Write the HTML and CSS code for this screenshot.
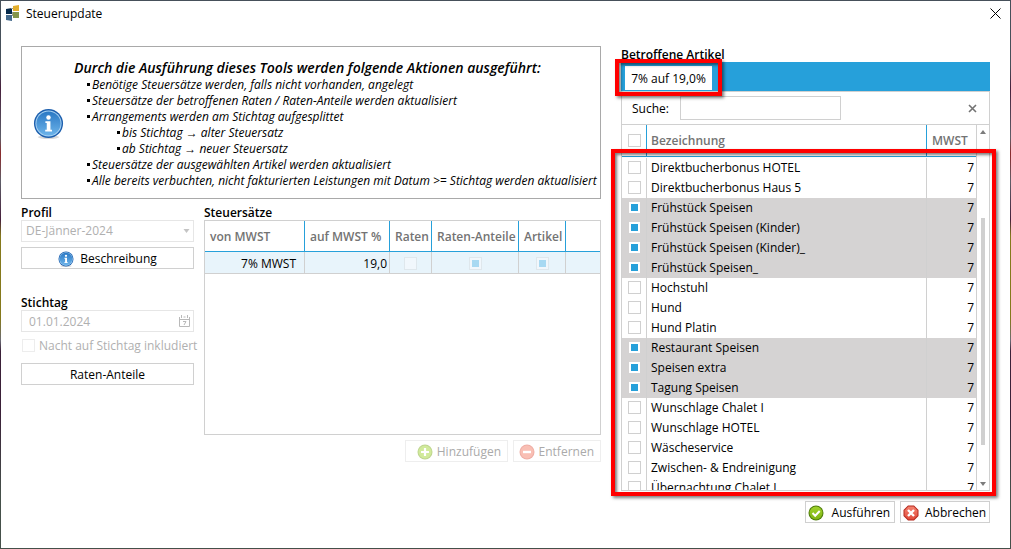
FILE: index.html
```html
<!DOCTYPE html>
<html lang="de">
<head>
<meta charset="utf-8">
<title>Steuerupdate</title>
<link rel="stylesheet" href="styles.css">
</head>
<body>
<svg class="defs" aria-hidden="true">
  <defs>
    <linearGradient id="blue" x1="0" y1="0" x2="0" y2="1"><stop offset="0" stop-color="#2a78c4"/><stop offset="1" stop-color="#6db4ea"/></linearGradient>
    <linearGradient id="green" x1="0" y1="0" x2="0" y2="1"><stop offset="0" stop-color="#a0d22c"/><stop offset="1" stop-color="#7fb414"/></linearGradient>
    <linearGradient id="red" x1="0" y1="0" x2="0" y2="1"><stop offset="0" stop-color="#f58270"/><stop offset="1" stop-color="#e04a3a"/></linearGradient>
    <symbol id="info" viewBox="0 0 32 32">
      <ellipse cx="16" cy="30" rx="11" ry="2" fill="#000" opacity=".15"/>
      <circle cx="16" cy="16" r="15" fill="#1c5fae"/>
      <circle cx="16" cy="16" r="13.5" fill="#a9d3f3"/>
      <circle cx="16" cy="16" r="12.5" fill="url(#blue)"/>
      <circle cx="16" cy="9.700" r="2.300" fill="#fff"/>
      <path d="M12.800 13.600h5.200v8.800h1.600v1.800h-7v-1.800h1.600v-7h-1.400z" fill="#fff"/>
    </symbol>
  </defs>
</svg>
<div class="window">
  <header class="titlebar">
    <svg class="logo" viewBox="0 0 13 17" aria-hidden="true">
      <path d="M7 1l6-1v6H7z" fill="#e3ae2c"/><path d="M0 4l6-1v6H0z" fill="#05294b"/>
      <path d="M7 7h6v6H7z" fill="#83954a"/><path d="M0 10h6v6l-6-1z" fill="#43698c"/>
      <path d="M5 3h2v1H5zM6 7h1v4H6z" fill="#9a9a8e"/>
    </svg>
    <h1>Steuerupdate</h1>
    <button class="close" type="button" aria-label="Schließen"><svg viewBox="0 0 11 11"><path d="M.5.5l10 10M10.500.5l-10 10" stroke="#000" stroke-width="1"/></svg></button>
  </header>
  <main class="content">
    <section class="left">
      <div class="notice">
        <svg class="notice-icon" aria-hidden="true"><use href="#info"/></svg>
        <div>
          <h2>Durch die Ausführung dieses Tools werden folgende Aktionen ausgeführt:</h2>
          <ul>
            <li>Benötige Steuersätze werden, falls nicht vorhanden, angelegt</li>
            <li>Steuersätze der betroffenen Raten / Raten-Anteile werden aktualisiert</li>
            <li>Arrangements werden am Stichtag aufgesplittet
              <ul><li>bis Stichtag → alter Steuersatz</li><li>ab Stichtag → neuer Steuersatz</li></ul>
            </li>
            <li>Steuersätze der ausgewählten Artikel werden aktualisiert</li>
            <li>Alle bereits verbuchten, nicht fakturierten Leistungen mit Datum &gt;= Stichtag werden aktualisiert</li>
          </ul>
        </div>
      </div>
      <div class="settings">
        <form class="form">
          <label class="caption" for="profil">Profil</label>
          <div class="field">
            <select id="profil" disabled><option>DE-Jänner-2024</option></select>
            <svg class="arrow" viewBox="0 0 6 4" aria-hidden="true"><path d="M0 0h6L3 4z" fill="#c4c4c4"/></svg>
          </div>
          <button class="btn describe" type="button"><svg class="icon" aria-hidden="true"><use href="#info"/></svg>Beschreibung</button>
          <label class="caption date-caption" for="stichtag">Stichtag</label>
          <div class="field">
            <input class="date" id="stichtag" type="text" value="01.01.2024" disabled>
            <svg class="calendar" viewBox="0 0 11 12" aria-hidden="true"><path d="M.5 2v9.500h10V2M.5 4.500h10M2.500 0v3M4.500 2h2M8.500 0v3M4 6.500h3L5 10" fill="none" stroke="#b9b9b9"/></svg>
          </div>
          <label class="night"><input class="check" type="checkbox" disabled>Nacht auf Stichtag inkludiert</label>
          <button class="btn" type="button">Raten-Anteile</button>
        </form>
        <div class="rates">
          <h3 class="caption" id="rates-title">Steuersätze</h3>
          <div class="rates-box">
            <table class="rates-table" aria-labelledby="rates-title">
              <colgroup><col class="c-from"><col class="c-to"><col class="c-rate"><col class="c-share"><col class="c-item"><col></colgroup>
              <thead><tr><th>von MWST</th><th>auf MWST %</th><th>Raten</th><th>Raten-Anteile</th><th>Artikel</th><th></th></tr></thead>
              <tbody><tr>
                <td class="num from">7% MWST</td><td class="num">19,0</td>
                <td><input class="check" type="checkbox" aria-label="Raten" disabled></td>
                <td><input class="check" type="checkbox" aria-label="Raten-Anteile" checked disabled></td>
                <td><input class="check" type="checkbox" aria-label="Artikel" checked disabled></td><td></td>
              </tr></tbody>
            </table>
          </div>
          <div class="actions">
            <button class="btn add" type="button" disabled><svg class="icon" viewBox="0 0 16 16" aria-hidden="true"><circle cx="8" cy="8" r="7.500" fill="#7fae22"/><circle cx="8" cy="8" r="6.500" fill="#a4d63a"/><path d="M8 4v8M4 8h8" stroke="#fff" stroke-width="2.200"/></svg>Hinzufügen</button>
            <button class="btn remove" type="button" disabled><svg class="icon" viewBox="0 0 16 16" aria-hidden="true"><circle cx="8" cy="8" r="7.500" fill="#e0604e"/><circle cx="8" cy="8" r="6.500" fill="#f5806c"/><path d="M4 8h8" stroke="#fff" stroke-width="2.400"/></svg>Entfernen</button>
          </div>
        </div>
      </div>
    </section>
    <section class="right">
      <h3 class="caption">Betroffene Artikel</h3>
      <div class="tabs"><button class="tab" type="button">7% auf 19,0%</button><span class="mark mark-tab"></span></div>
      <div class="search">
        <label for="suche">Suche:</label><input id="suche" type="text">
        <button class="clear" type="button" aria-label="Suche leeren"><svg viewBox="0 0 9 9"><path d="M1 1l7 7M8 1L1 8" stroke="#737373" stroke-width="1.600"/></svg></button>
      </div>
      <div class="list">
        <div class="list-view">
          <table class="articles">
            <colgroup><col class="c-check"><col><col class="c-vat"></colgroup>
            <thead><tr><th><input class="check" type="checkbox" aria-label="Alle auswählen"></th><th>Bezeichnung</th><th>MWST</th></tr></thead>
            <tbody>
              <tr><td><input class="check" type="checkbox" id="a1"></td><td><label for="a1">Direktbucherbonus HOTEL</label></td><td>7</td></tr>
              <tr><td><input class="check" type="checkbox" id="a2"></td><td><label for="a2">Direktbucherbonus Haus 5</label></td><td>7</td></tr>
              <tr class="on"><td><input class="check" type="checkbox" id="a3" checked></td><td><label for="a3">Frühstück Speisen</label></td><td>7</td></tr>
              <tr class="on"><td><input class="check" type="checkbox" id="a4" checked></td><td><label for="a4">Frühstück Speisen (Kinder)</label></td><td>7</td></tr>
              <tr class="on"><td><input class="check" type="checkbox" id="a5" checked></td><td><label for="a5">Frühstück Speisen (Kinder)_</label></td><td>7</td></tr>
              <tr class="on"><td><input class="check" type="checkbox" id="a6" checked></td><td><label for="a6">Frühstück Speisen_</label></td><td>7</td></tr>
              <tr><td><input class="check" type="checkbox" id="a7"></td><td><label for="a7">Hochstuhl</label></td><td>7</td></tr>
              <tr><td><input class="check" type="checkbox" id="a8"></td><td><label for="a8">Hund</label></td><td>7</td></tr>
              <tr><td><input class="check" type="checkbox" id="a9"></td><td><label for="a9">Hund Platin</label></td><td>7</td></tr>
              <tr class="on"><td><input class="check" type="checkbox" id="a10" checked></td><td><label for="a10">Restaurant Speisen</label></td><td>7</td></tr>
              <tr class="on"><td><input class="check" type="checkbox" id="a11" checked></td><td><label for="a11">Speisen extra</label></td><td>7</td></tr>
              <tr class="on"><td><input class="check" type="checkbox" id="a12" checked></td><td><label for="a12">Tagung Speisen</label></td><td>7</td></tr>
              <tr><td><input class="check" type="checkbox" id="a13"></td><td><label for="a13">Wunschlage Chalet I</label></td><td>7</td></tr>
              <tr><td><input class="check" type="checkbox" id="a14"></td><td><label for="a14">Wunschlage HOTEL</label></td><td>7</td></tr>
              <tr><td><input class="check" type="checkbox" id="a15"></td><td><label for="a15">Wäscheservice</label></td><td>7</td></tr>
              <tr><td><input class="check" type="checkbox" id="a16"></td><td><label for="a16">Zwischen- &amp; Endreinigung</label></td><td>7</td></tr>
              <tr><td><input class="check" type="checkbox" id="a17"></td><td><label for="a17">Übernachtung Chalet I</label></td><td>7</td></tr>
            </tbody>
          </table>
        </div>
        <div class="scrollbar" aria-hidden="true">
          <svg viewBox="0 0 6 4"><path d="M0 4h6L3 0z" fill="#7c7c7c"/></svg>
          <div class="track"><div class="thumb"></div></div>
          <svg viewBox="0 0 6 4"><path d="M0 0h6L3 4z" fill="#7c7c7c"/></svg>
        </div>
        <span class="mark mark-list"></span>
      </div>
      <footer class="actions">
        <button class="btn run" type="button"><svg class="icon" viewBox="0 0 16 16" aria-hidden="true"><circle cx="8" cy="8" r="7.500" fill="#4f7d0c"/><circle cx="8" cy="8" r="6.500" fill="url(#green)"/><path d="M4.500 8l2.700 2.700L11.700 6" fill="none" stroke="#fff" stroke-width="2"/></svg>Ausführen</button>
        <button class="btn cancel" type="button"><svg class="icon" viewBox="0 0 16 16" aria-hidden="true"><path d="M5 .5h6L15.500 5v6L11 15.500H5L.5 11V5z" fill="#b3261b"/><path d="M5.400 1.500h5.200l3.900 3.900v5.200l-3.900 3.900H5.400l-3.900-3.900V5.400z" fill="url(#red)"/><path d="M5 5l6 6M11 5l-6 6" stroke="#fff" stroke-width="2.400"/></svg>Abbrechen</button>
      </footer>
    </section>
  </main>
</div>
</body>
</html>
```
FILE: styles.css
```css
* { box-sizing: border-box; }

body {
  margin: 0;
  padding: 1px;
  height: 100vh;
  font: 12px/16px "Open Sans", "Noto Sans", sans-serif;
  color: #000;
  background: linear-gradient(#46505a 0 12%, #46203c 16%, #5e5e68 25%, #8c2a2c 28%, #5e5e68 33%, #46203c 40%, #85791c 43% 58%, #6b6b74 62%, #3a2038 64% 75%, #45504a 90%);
}

h1, h2, h3, ul { margin: 0; padding: 0; font: inherit; }
button, input, select { font: inherit; color: inherit; margin: 0; }
svg { display: block; }
.defs { position: absolute; width: 0; height: 0; }

.window { height: 100%; display: flex; flex-direction: column; background: #fff; }

.titlebar { display: flex; align-items: center; gap: 7px; height: 25px; padding: 0 9px 0 5px; }
.logo { width: 13px; height: 17px; }
.titlebar h1 { flex: 1; }
.close { border: 0; padding: 0; background: none; width: 11px; height: 11px; }

.content {
  flex: 1;
  min-height: 0;
  display: grid;
  grid-template-columns: 580fr 369fr;
  gap: 20px;
  padding: 20px 20px 25px;
}

.left, .right { display: flex; flex-direction: column; min-width: 0; min-height: 0; }

.notice {
  display: flex;
  align-items: center;
  gap: 10px;
  height: 153px;
  padding: 2px 5px 0 11px;
  border: 1px solid #a9a9a9;
  font-style: italic;
  white-space: nowrap;
}
.notice-icon { width: 31px; height: 31px; flex: none; }
.notice h2 { font-size: 14px; line-height: 18px; font-weight: 600; }
.notice ul { list-style: none; padding-left: 13px; }
.notice li ul { padding-left: 30px; }
.notice li::before { content: ""; display: inline-block; width: 3px; height: 3px; margin-right: 2px; vertical-align: 3px; background: #000; }

.caption { display: block; font-weight: 600; line-height: 14px; padding-top: 2px; }

.settings { display: grid; grid-template-columns: 173px 1fr; gap: 10px; padding-top: 5px; }
.form { display: flex; flex-direction: column; }
.field { display: grid; align-items: center; }
.field > * { grid-area: 1 / 1; }
.field select, .field input {
  appearance: none;
  width: 100%;
  height: 22px;
  padding: 0 4px;
  border: 1px solid #e6e6e6;
  border-radius: 0;
  background: #fff;
  color: #b0b0b0;
  opacity: 1;
}
.field .date { padding-left: 7px; }
.field svg { justify-self: end; }
.arrow { width: 7px; height: 4px; margin-right: 4px; }
.calendar { width: 11px; height: 12px; margin-right: 4px; }

.btn {
  display: flex;
  align-items: center;
  justify-content: center;
  gap: 6px;
  height: 22px;
  padding: 1px 6px 0;
  border: 1px solid #d0d0d0;
  background: #fff;
  white-space: nowrap;
}
.btn:disabled { border-color: #eee; color: #aaa; }
.btn:disabled .icon { opacity: .5; }
.icon { width: 16px; height: 16px; flex: none; }
.describe { margin-top: 5px; }
.date-caption { margin-top: 25px; }
.night { display: flex; align-items: center; gap: 4px; height: 31px; padding: 0 0 4px 1px; color: #b0b0b0; white-space: nowrap; }

.check {
  appearance: none;
  display: block;
  flex: none;
  width: 13px;
  height: 13px;
  padding: 2px;
  border: 1px solid #d0d0d0;
  background: #fff;
}
.check:checked { border-color: #d5d3d3; background: linear-gradient(#26a0da, #26a0da) content-box, #fff; }
.check:disabled { border-color: #ededed; }
td .check:disabled { background-color: #f1f7fc; border-color: #dfe7ec; }
td .check:checked:disabled { background: linear-gradient(#a8d9f2, #a8d9f2) content-box, #f1f7fc; }

.rates { display: flex; flex-direction: column; min-width: 0; }
.rates-box { height: 215px; border: 1px solid #d0d0d0; }
table { width: 100%; border-collapse: separate; border-spacing: 0; table-layout: fixed; }
th { padding: 0 4px; color: #737373; font-weight: 600; text-align: left; white-space: nowrap; border-bottom: 1px solid #26a0da; }
th + th { border-left: 1px solid #26a0da; }
td { padding: 0 4px; white-space: nowrap; }
td + td { border-left: 1px solid #d0d0d0; }
.num { text-align: right; }

.rates-table th { height: 31px; padding: 2px 4px 0 5px; }
.rates-table td { height: 22px; padding: 2px 2px 0; background: #e8f4fb; border-bottom: 1px solid #d0d0d0; }
.rates-table td.from { padding-right: 8px; }
.rates-table .check { margin: 0 auto; }
.c-from { width: 99px; }
.c-to { width: 85px; }
.c-rate { width: 42px; }
.c-share { width: 87px; }
.c-item { width: 47px; }

.actions { display: flex; justify-content: flex-end; gap: 5px; margin-top: 5px; }
.add, .remove { gap: 4px; justify-content: flex-end; }
.add { width: 103px; }
.remove { width: 88px; }

.tabs { position: relative; height: 29px; padding: 4px 4px 1px; background: #26a0da; }
.tab { height: 24px; width: 87px; padding: 2px 0 0; border: 0; background: #fff; white-space: nowrap; }

.search { display: flex; align-items: center; height: 33px; padding: 0 12px 0 10px; border: 1px solid #d0d0d0; border-bottom: 0; }
.search label { width: 48px; padding-top: 2px; }
.search input { width: 161px; height: 24px; padding: 0 4px; border: 1px solid #d0d0d0; background: #fff; }
.clear { margin-left: auto; width: 9px; height: 9px; padding: 0; border: 0; background: none; }

.list { position: relative; flex: 1; min-height: 0; display: flex; border: 1px solid #d0d0d0; }
.list-view { flex: 1; min-width: 0; overflow: hidden; border-right: 1px solid #d0d0d0; }
.articles th { height: 32px; }
.articles th:last-child { padding-left: 5px; }
.articles tbody::before { content: ""; display: table-row; height: 1px; }
.articles td { height: 20px; }
.articles td:first-child { padding-bottom: 2px; }
.articles .check { margin: 0 auto; }
.articles td:last-child { padding-right: 2px; text-align: right; }
.articles .on td { background: #d5d3d3; }
.c-check { width: 24px; }
.c-vat { width: 50px; }

.scrollbar { display: flex; flex-direction: column; align-items: center; width: 12px; padding: 5px 0 4px; }
.scrollbar svg { width: 6px; height: 4px; }
.track { flex: 1; width: 4px; padding-top: 84px; }
.thumb { height: 86%; background: #d0d0d0; }

.right .actions { margin-top: 10px; }
.run, .cancel { width: 90px; padding: 1px 4px 0 2px; justify-content: space-between; }

/* Red highlight frames lying over the content */
.mark { position: absolute; border: 4px solid #f00; box-shadow: 2px 2px 3px rgba(0, 0, 0, .5), inset 2px 2px 3px rgba(0, 0, 0, .5); pointer-events: none; }
.mark-tab { left: -6px; top: -3px; width: 107px; height: 37px; }
.mark-list { left: -11px; top: 24px; right: -7px; bottom: -6px; }
```
